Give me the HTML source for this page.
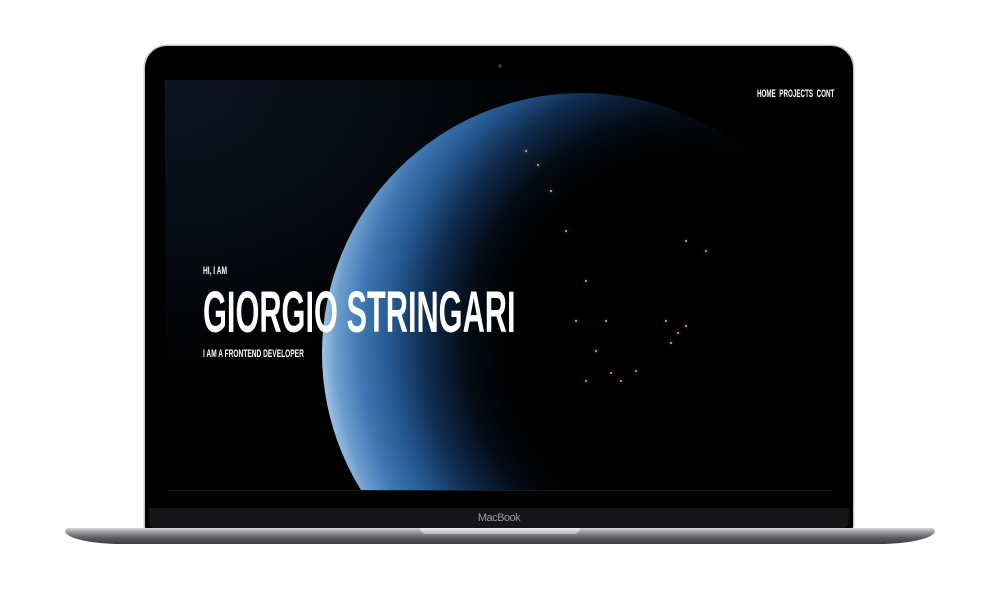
<!DOCTYPE html>
<html><head><style>
html,body{margin:0;padding:0;background:#fff;width:1000px;height:600px;overflow:hidden;position:relative;font-family:"Liberation Sans",sans-serif}
.lid{position:absolute;left:145px;top:46px;width:708px;height:484px;background:#000;border-radius:22px 22px 4px 4px;box-shadow:0 0 0 1.5px #c8c8cc}
.cam{position:absolute;left:498px;top:64px;width:4px;height:4px;border-radius:50%;background:#333}
.screen{position:absolute;left:165px;top:80px;width:670px;height:410px;background:#000;overflow:hidden}
.bg{position:absolute;left:0;top:0;width:670px;height:410px;background:radial-gradient(ellipse 400px 300px at 0 0,#0d1524,#04070c 70%,#000)}
.planet{position:absolute;left:157px;top:13px;width:520px;height:520px;border-radius:50%;
background:radial-gradient(circle 420px at 374px 250px,#000 0,#000 190px,#040b15 230px,#0f2b4e 270px,#24578f 305px,#3d76b2 335px,#6d9dce 360px,#9cc2e4 374px,#6fa0d4 380px)}
.c{position:absolute;width:2px;height:2px;border-radius:50%;background:#f2b24a;box-shadow:0 0 3px #d08a20}
.bottom{position:absolute;left:149px;top:508px;width:700px;height:20px;background:#151518;border-radius:0 0 6px 6px;text-align:center;color:#9a9aa0;font-size:11px;line-height:20px;letter-spacing:-.5px}
.line{position:absolute;left:167px;top:490px;width:666px;height:1px;background:#1c1c1c}
.base{position:absolute;left:65px;top:528px;width:870px;height:16px;background:linear-gradient(180deg,#d8d8dc 0,#9a9ba0 25%,#5e5f64 60%,#3a3b3f 100%);border-radius:3px 3px 60px 60px/3px 3px 14px 14px}
.notch{position:absolute;left:420px;top:528px;width:160px;height:6px;background:linear-gradient(#f0f0f2,#b4b5b9);border-radius:0 0 6px 6px}
.t{position:absolute;color:#fff;font-weight:bold;transform-origin:0 0;white-space:nowrap}
</style></head><body>
<div class="lid"></div>
<div class="cam"></div>
<div class="screen">
 <div class="bg"></div>
 <div class="planet"></div>
 <div class="c" style="left:360px;top:70px"></div><div class="c" style="left:372px;top:84px"></div>
 <div class="c" style="left:385px;top:110px"></div><div class="c" style="left:400px;top:150px"></div>
 <div class="c" style="left:420px;top:200px"></div><div class="c" style="left:440px;top:240px"></div>
 <div class="c" style="left:500px;top:240px"></div><div class="c" style="left:512px;top:252px"></div>
 <div class="c" style="left:520px;top:245px"></div><div class="c" style="left:505px;top:262px"></div>
 <div class="c" style="left:470px;top:290px"></div><div class="c" style="left:455px;top:300px"></div>
 <div class="c" style="left:445px;top:292px"></div><div class="c" style="left:420px;top:300px"></div>
 <div class="c" style="left:430px;top:270px"></div><div class="c" style="left:410px;top:240px"></div>
 <div class="c" style="left:520px;top:160px"></div><div class="c" style="left:540px;top:170px"></div>
</div>
<div class="line"></div>
<div class="t" style="left:757px;top:88px;font-size:11px;transform:scaleX(.57)">HOME&nbsp; PROJECTS&nbsp; CONT</div>
<div class="t" style="left:203px;top:265px;font-size:11px;transform:scaleX(.6)">HI, I AM</div>
<div class="t" style="left:203px;top:281px;font-size:58px;line-height:64px;transform:scaleX(.53)">GIORGIO STRINGARI</div>
<div class="t" style="left:203px;top:348px;font-size:11px;transform:scaleX(.6)">I AM A FRONTEND DEVELOPER</div>
<div class="bottom">MacBook</div>
<div class="base"></div>
<div class="notch"></div>
</body></html>
